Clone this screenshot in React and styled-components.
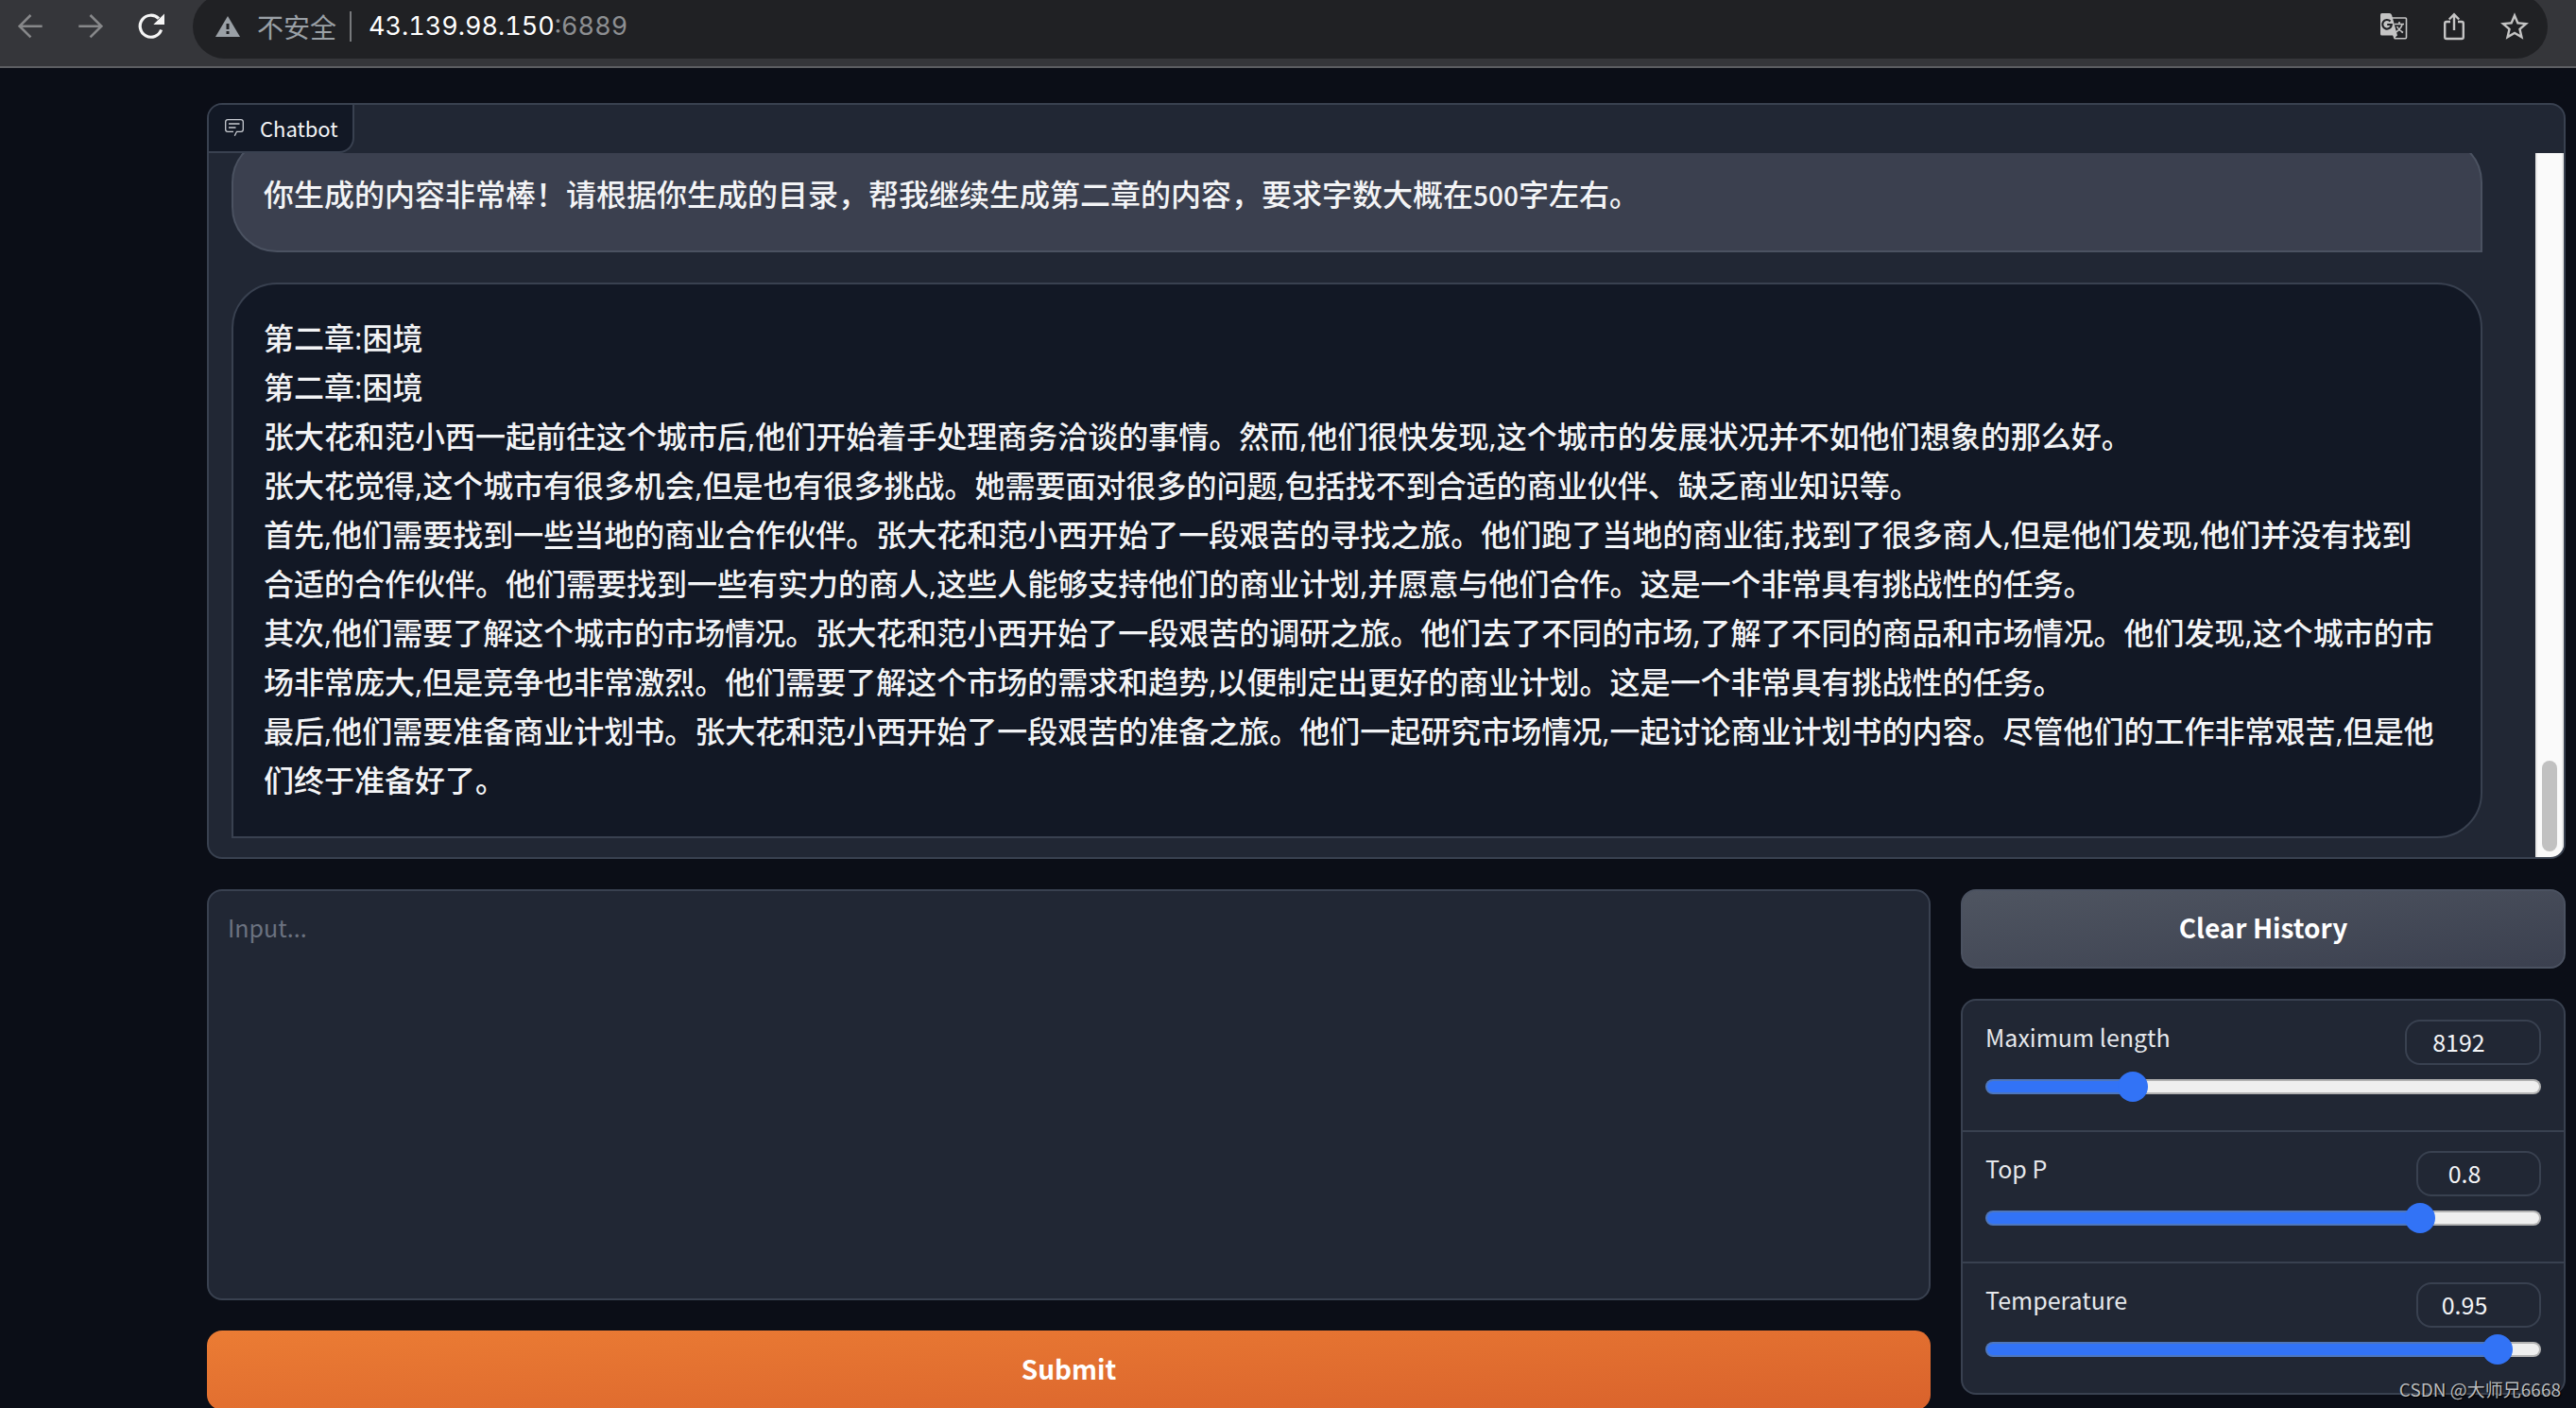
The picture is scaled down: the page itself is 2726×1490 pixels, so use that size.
import React, { useState } from "react";
import styled, { createGlobalStyle } from "styled-components";

const GlobalStyle = createGlobalStyle`
  * {
    box-sizing: border-box;
  }

  body {
    margin: 0;
    background: #0b0e17;
    color: #f3f4f6;
    font-family: "Noto Sans CJK SC", sans-serif;
  }
`;

const question = [
  "你生成的内容非常棒！请根据你生成的目录，帮我继续生成第二章的内容，要求字数大概在",
  "500",
  "字左右。",
];

const answer = [
  "第二章:困境",
  "第二章:困境",
  "张大花和范小西一起前往这个城市后,他们开始着手处理商务洽谈的事情。然而,他们很快发现,这个城市的发展状况并不如他们想象的那么好。",
  "张大花觉得,这个城市有很多机会,但是也有很多挑战。她需要面对很多的问题,包括找不到合适的商业伙伴、缺乏商业知识等。",
  "首先,他们需要找到一些当地的商业合作伙伴。张大花和范小西开始了一段艰苦的寻找之旅。他们跑了当地的商业街,找到了很多商人,但是他们发现,他们并没有找到",
  "合适的合作伙伴。他们需要找到一些有实力的商人,这些人能够支持他们的商业计划,并愿意与他们合作。这是一个非常具有挑战性的任务。",
  "其次,他们需要了解这个城市的市场情况。张大花和范小西开始了一段艰苦的调研之旅。他们去了不同的市场,了解了不同的商品和市场情况。他们发现,这个城市的市",
  "场非常庞大,但是竞争也非常激烈。他们需要了解这个市场的需求和趋势,以便制定出更好的商业计划。这是一个非常具有挑战性的任务。",
  "最后,他们需要准备商业计划书。张大花和范小西开始了一段艰苦的准备之旅。他们一起研究市场情况,一起讨论商业计划书的内容。尽管他们的工作非常艰苦,但是他",
  "们终于准备好了。",
];

const settings = [
  { id: "max-length", label: "Maximum length", max: 32768, step: 1, initial: 8192, wide: true },
  { id: "top-p", label: "Top P", max: 1, step: 0.01, initial: 0.8 },
  { id: "temperature", label: "Temperature", max: 1, step: 0.01, initial: 0.95 },
];

function BrowserBar() {
  return (
    <Toolbar>
      <ToolbarButton aria-label="Back" $dim>
        <svg width="28" height="34" viewBox="0 0 28 34" fill="none" stroke="currentColor" strokeWidth="2.6">
          <path d="M26.700 16.700H2.500M14.500 5L2.700 16.700L14.500 28.400" />
        </svg>
      </ToolbarButton>
      <ToolbarButton aria-label="Forward" $dim>
        <svg width="28" height="34" viewBox="0 0 28 34" fill="none" stroke="currentColor" strokeWidth="2.6">
          <path d="M1.300 16.700H25.500M13.500 5L25.300 16.700L13.500 28.400" />
        </svg>
      </ToolbarButton>
      <ToolbarButton aria-label="Reload">
        <svg width="30" height="30" viewBox="0 0 30 30" fill="none" stroke="currentColor" strokeWidth="3.200">
          <path d="M25.600 18.500A11.500 11.500 0 1 1 23 6.700" />
          <path d="M29 1.500V13H17.300Z" fill="currentColor" stroke="none" />
        </svg>
      </ToolbarButton>
      <AddressBar>
        <svg width="26" height="22" viewBox="0 0 26 22" fill="#9aa0a6">
          <path d="M13 0L26 22H0Z" />
          <path d="M11.500 8H14.500V14H11.500ZM11.500 16H14.500V19H11.500Z" fill="#202124" />
        </svg>
        <Insecure>不安全</Insecure>
        <Address>
          43.139.98.150<Port>:6889</Port>
        </Address>
        <AddressActions>
          <IconButton aria-label="Translate">
            <svg width="30" height="30" viewBox="0 0 30 30" fill="none">
              <path d="M13 6H27.500Q28.500 6 28.500 7V26.500Q28.500 27.700 27.500 27.700H16" stroke="#c4c4c4" strokeWidth="1.600" />
              <path d="M2.500 1H10.500Q12.500 1 13.100 3L19 24.500H2.500Q1 24.500 1 23V2.500Q1 1 2.500 1Z" fill="#c4c4c4" />
              <path d="M19 24L15.500 28.500L14 24Z" fill="#c4c4c4" />
              <path d="M11.500 9.500A4.800 4.800 0 1 0 12.800 13H8.200" stroke="#202124" strokeWidth="2.200" />
              <path d="M16 12.500H26M21 10V12.500M24 13Q22.500 18 17.500 21M18.500 15Q20.500 19 25 21.500" stroke="#c4c4c4" strokeWidth="1.600" />
            </svg>
          </IconButton>
          <IconButton aria-label="Share">
            <svg width="24" height="30" viewBox="0 0 24 30" fill="none" stroke="#c4c4c4" strokeWidth="2.400">
              <path d="M8 10H4Q2.200 10 2.200 11.800V26.200Q2.200 28 4 28H20Q21.800 28 21.800 26.200V11.800Q21.800 10 20 10H16" />
              <path d="M12 19V2.500M6.800 7.500L12 2.300L17.200 7.500" />
            </svg>
          </IconButton>
          <IconButton aria-label="Bookmark">
            <svg width="30" height="30" viewBox="2 1.8 20 20" fill="#c4c4c4">
              <path d="M22 9.240l-7.190-.62L12 2 9.190 8.630 2 9.240l5.460 4.730L5.820 21 12 17.270 18.180 21l-1.630-7.030L22 9.240zM12 15.400l-3.760 2.270 1-4.280-3.320-2.880 4.380-.38L12 6.100l1.710 4.040 4.380.38-3.320 2.880 1 4.280L12 15.400z" />
            </svg>
          </IconButton>
        </AddressActions>
      </AddressBar>
    </Toolbar>
  );
}

function Chatbot() {
  return (
    <ChatPanel>
      <ChatLabel>
        <svg width="20" height="18" viewBox="0 0 20 18" fill="none" stroke="#c9ccd2" strokeWidth="1.300">
          <path d="M10.300 17.700L12.500 13.300H17Q19.300 13.300 19.300 11V3Q19.300 .7 17 .7H3Q.7 .7 .7 3V11Q.7 13.300 3 13.300H9" />
          <path d="M4 5H15.500M4 9H11.500" />
        </svg>
        Chatbot
      </ChatLabel>
      <ChatBody>
        <Messages>
          <UserMessage>
            {question[0]}
            <Digits>{question[1]}</Digits>
            {question[2]}
          </UserMessage>
          <BotMessage>
            {answer.map((line, i) => (
              <Line key={i}>{line}</Line>
            ))}
          </BotMessage>
        </Messages>
        <ScrollTrack>
          <ScrollThumb />
        </ScrollTrack>
      </ChatBody>
    </ChatPanel>
  );
}

function Setting({ id, label, max, step, initial, wide }) {
  const [value, setValue] = useState(initial);

  return (
    <SettingRow>
      <SettingHead>
        <SettingLabel htmlFor={id}>{label}</SettingLabel>
        <NumberInput
          id={id}
          type="number"
          min={0}
          max={max}
          step={step}
          value={value}
          $wide={wide}
          onChange={(e) => setValue(e.target.value)}
        />
      </SettingHead>
      <Slider
        type="range"
        aria-label={label}
        min={0}
        max={max}
        step={step}
        value={value}
        style={{ "--fill": value / max }}
        onChange={(e) => setValue(e.target.value)}
      />
    </SettingRow>
  );
}

function App() {
  const [text, setText] = useState("");

  return (
    <Screen>
      <GlobalStyle />
      <BrowserBar />
      <Main>
        <Chatbot />
        <Controls>
          <InputColumn>
            <Prompt
              aria-label="Input"
              placeholder="Input..."
              value={text}
              onChange={(e) => setText(e.target.value)}
            />
            <Button $primary>Submit</Button>
          </InputColumn>
          <SideColumn>
            <Button onClick={() => setText("")}>Clear History</Button>
            <Settings>
              {settings.map((item) => (
                <Setting key={item.id} {...item} />
              ))}
            </Settings>
          </SideColumn>
        </Controls>
      </Main>
      <Watermark>CSDN @大师兄6668</Watermark>
    </Screen>
  );
}

export default App;

const Screen = styled.div`
  position: relative;
  height: 100vh;
  overflow: hidden;
`;

const Toolbar = styled.header`
  display: flex;
  align-items: flex-start;
  height: 72px;
  padding: 0 30px 0 0;
  overflow: hidden;
  background: #35363a;
  border-bottom: 2px solid #5c5e62;
`;

const ToolbarButton = styled.button`
  display: flex;
  align-items: center;
  justify-content: center;
  width: 64px;
  height: 56px;
  padding: 0;
  border: none;
  background: none;
  color: ${(props) => (props.$dim ? "#87888a" : "#f5f5f5")};
`;

const AddressBar = styled.div`
  display: flex;
  flex: 1;
  align-items: center;
  height: 68px;
  margin: -6px 0 0 12px;
  padding: 0 20px 0 24px;
  border-radius: 34px;
  background: #202124;
`;

const Insecure = styled.span`
  margin-left: 18px;
  padding-right: 14px;
  border-right: 2px solid #77797c;
  color: #9aa0a6;
  font-size: 28px;
  line-height: 32px;
`;

const Address = styled.span`
  margin-left: 18px;
  color: #fff;
  font-family: Inter, sans-serif;
  font-size: 27px;
  font-variant-numeric: tabular-nums;
  line-height: 32px;
`;

const Port = styled.span`
  color: #8d8f92;
`;

const AddressActions = styled.div`
  display: flex;
  gap: 34px;
  margin-left: auto;
`;

const IconButton = styled.button`
  display: flex;
  align-items: center;
  justify-content: center;
  width: 30px;
  height: 30px;
  padding: 0;
  border: none;
  background: none;
`;

const Main = styled.main`
  display: flex;
  flex-direction: column;
  gap: 32px;
  padding: 37px 11px 0 219px;
`;

const ChatPanel = styled.section`
  overflow: hidden;
  border: 2px solid #394150;
  border-radius: 16px;
  background: #212734;
`;

const ChatLabel = styled.div`
  display: flex;
  align-items: center;
  gap: 17px;
  width: fit-content;
  height: 51px;
  padding: 0 15px 2px 17px;
  border-right: 2px solid #394150;
  border-bottom: 2px solid #394150;
  border-bottom-right-radius: 16px;
  background: #121825;
  font-size: 22px;
  line-height: 32px;
`;

const ChatBody = styled.div`
  display: flex;
  height: 745px;
`;

const Messages = styled.div`
  display: flex;
  flex: 1;
  flex-direction: column;
  justify-content: flex-end;
  gap: 32px;
  min-width: 0;
  padding: 0 56px 20px 24px;
  overflow: hidden;
`;

const Message = styled.div`
  flex-shrink: 0;
  padding: 31px 32px 33px;
  border: 2px solid #394150;
  border-radius: 48px;
  font-size: 32px;
  font-weight: 500;
  line-height: 52px;
`;

const UserMessage = styled(Message)`
  border-color: #4b5261;
  border-bottom-right-radius: 0;
  background: #3b404f;
`;

const BotMessage = styled(Message)`
  border-bottom-left-radius: 0;
  background: #121825;
  font-family: "Open Sans", "Noto Sans CJK SC", sans-serif;
`;

const Digits = styled.span`
  font-size: 28px;
`;

const Line = styled.div`
  min-height: 52px;
`;

const ScrollTrack = styled.div`
  display: flex;
  align-items: flex-end;
  justify-content: center;
  width: 30px;
  padding-bottom: 6px;
  border: solid #e8e8e8;
  border-width: 0 2px;
  background: #fafafa;
`;

const ScrollThumb = styled.div`
  width: 16px;
  height: 96px;
  border-radius: 8px;
  background: #c1c1c1;
`;

const Controls = styled.div`
  display: flex;
  align-items: flex-start;
  gap: 32px;
`;

const InputColumn = styled.div`
  display: flex;
  flex: 1;
  flex-direction: column;
  gap: 32px;
`;

const SideColumn = styled.div`
  display: flex;
  flex-direction: column;
  gap: 32px;
  width: 640px;
`;

const Prompt = styled.textarea`
  display: block;
  width: 100%;
  height: 435px;
  padding: 20px;
  border: 2px solid #394150;
  border-radius: 16px;
  outline: none;
  resize: none;
  background: #212734;
  color: #f3f4f6;
  font-family: inherit;
  font-size: 25px;
  line-height: 36px;

  &::placeholder {
    color: #6b7280;
  }
`;

const Button = styled.button`
  height: 84px;
  padding: 0 16px 4px;
  border: 2px solid ${(props) => (props.$primary ? "transparent" : "#4b5261")};
  border-radius: 16px;
  background: ${(props) =>
    props.$primary
      ? "linear-gradient(to bottom right, #eb7c34, #d9622c) border-box"
      : "linear-gradient(to bottom right, #4f5561, #3b404f)"};
  color: #fff;
  font-family: inherit;
  font-size: 28px;
  font-weight: 700;
  line-height: 48px;
`;

const Settings = styled.div`
  overflow: hidden;
  border: 2px solid #394150;
  border-radius: 16px;
  background: #212734;
`;

const SettingRow = styled.div`
  display: flex;
  flex-direction: column;
  gap: 7px;
  padding: 20px 24px 30px;

  & + & {
    border-top: 2px solid #394150;
  }
`;

const SettingHead = styled.div`
  display: flex;
  align-items: flex-start;
  justify-content: space-between;
`;

const SettingLabel = styled.label`
  color: #e5e7eb;
  font-size: 25px;
  line-height: 36px;
`;

const NumberInput = styled.input`
  width: ${(props) => (props.$wide ? 144 : 132)}px;
  height: 48px;
  padding: 0 38px 2px 8px;
  border: 2px solid #394150;
  border-radius: 16px;
  outline: none;
  background: #212734;
  color: #f3f4f6;
  font-family: inherit;
  font-size: 25px;
  text-align: center;
  appearance: textfield;

  &::-webkit-inner-spin-button {
    display: none;
  }
`;

const Slider = styled.input`
  --edge: calc(16px + (100% - 32px) * var(--fill));
  width: 100%;
  height: 32px;
  margin: 0;
  appearance: none;
  background: none;

  &::-webkit-slider-runnable-track {
    height: 16px;
    border: 2px solid transparent;
    border-radius: 8px;
    background:
      linear-gradient(to right, #3273f6 var(--edge), #efefef var(--edge)) padding-box,
      linear-gradient(to right, #4d76bd var(--edge), #b2b2b2 var(--edge)) border-box;
  }

  &::-webkit-slider-thumb {
    width: 32px;
    height: 32px;
    margin-top: -10px;
    appearance: none;
    border: none;
    border-radius: 50%;
    background: #3273f6;
  }
`;

const Watermark = styled.div`
  position: absolute;
  right: 16px;
  bottom: 6px;
  color: #b9bbbe;
  font-size: 19px;
  line-height: 28px;
  text-shadow: 1px 1px 1px #000;
`;
